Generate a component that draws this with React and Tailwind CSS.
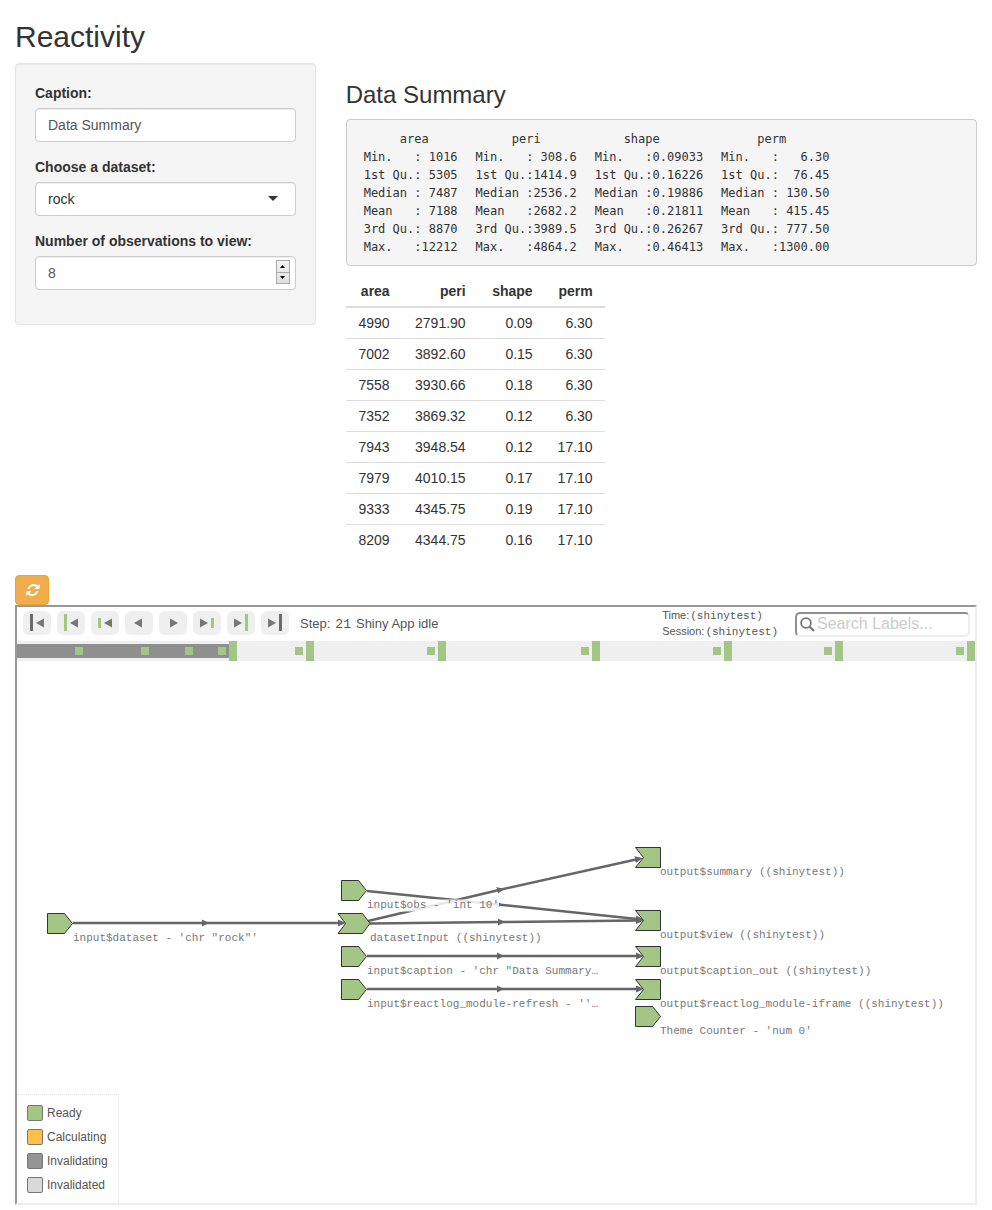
import { useState } from "react";

const summary = [
  ["     area    ", "Min.   : 1016", "1st Qu.: 5305", "Median : 7487", "Mean   : 7188", "3rd Qu.: 8870", "Max.   :12212"],
  ["     peri     ", "Min.   : 308.6", "1st Qu.:1414.9", "Median :2536.2", "Mean   :2682.2", "3rd Qu.:3989.5", "Max.   :4864.2"],
  ["    shape      ", "Min.   :0.09033", "1st Qu.:0.16226", "Median :0.19886", "Mean   :0.21811", "3rd Qu.:0.26267", "Max.   :0.46413"],
  ["     perm      ", "Min.   :   6.30", "1st Qu.:  76.45", "Median : 130.50", "Mean   : 415.45", "3rd Qu.: 777.50", "Max.   :1300.00"],
];

const rows = [
  ["4990", "2791.90", "0.09", "6.30"],
  ["7002", "3892.60", "0.15", "6.30"],
  ["7558", "3930.66", "0.18", "6.30"],
  ["7352", "3869.32", "0.12", "6.30"],
  ["7943", "3948.54", "0.12", "17.10"],
  ["7979", "4010.15", "0.17", "17.10"],
  ["9333", "4345.75", "0.19", "17.10"],
  ["8209", "4344.75", "0.16", "17.10"],
];

const field =
  "block h-[34px] w-full rounded border border-[#ccc] bg-white px-3 text-sm shadow-[inset_0_1px_1px_rgba(0,0,0,0.075)] outline-none";

function Sidebar() {
  const [obs, setObs] = useState(8);
  return (
    <form className="rounded border border-[#e3e3e3] bg-[#f5f5f5] p-[19px] shadow-[inset_0_1px_1px_rgba(0,0,0,0.05)]">
      <div className="mb-[15px]">
        <label htmlFor="caption" className="mb-[5px] block text-sm font-bold">Caption:</label>
        <input id="caption" type="text" defaultValue="Data Summary" className={field + " text-[#555]"} />
      </div>
      <div className="mb-[15px]">
        <label htmlFor="dataset" className="mb-[5px] block text-sm font-bold">Choose a dataset:</label>
        <div className="relative">
          <select id="dataset" defaultValue="rock" className={field + " appearance-none text-[#333]"}>
            <option>rock</option>
            <option>pressure</option>
            <option>cars</option>
          </select>
          <svg className="pointer-events-none absolute top-[14px] right-[18px]" width="10" height="5" viewBox="0 0 10 5">
            <path d="M0 0H10L5 5Z" fill="#333" />
          </svg>
        </div>
      </div>
      <div className="mb-[15px]">
        <label htmlFor="obs" className="mb-[5px] block text-sm font-bold">Number of observations to view:</label>
        <div className="relative">
          <input
            id="obs"
            type="number"
            value={obs}
            onChange={(e) => setObs(Number(e.target.value))}
            className={field + " text-[#555] [appearance:textfield] [&::-webkit-inner-spin-button]:appearance-none"}
          />
          <div className="absolute top-1 right-[6px] flex h-6 w-[14px] flex-col border border-[#aaa] bg-linear-to-b from-[#f3f3f3] to-[#e0e0e0]">
            <button type="button" aria-label="Increase" onClick={() => setObs(obs + 1)} className="flex flex-1 items-center justify-center border-b border-[#aaa]">
              <svg width="5" height="3" viewBox="0 0 5 3"><path d="M0 3H5L2.5 0Z" fill="#000" /></svg>
            </button>
            <button type="button" aria-label="Decrease" onClick={() => setObs(obs - 1)} className="flex flex-1 items-center justify-center">
              <svg width="5" height="3" viewBox="0 0 5 3"><path d="M0 0H5L2.5 3Z" fill="#000" /></svg>
            </button>
          </div>
        </div>
      </div>
    </form>
  );
}

function Results() {
  return (
    <div className="min-w-0 pt-5">
      <h3 className="mb-3 text-2xl leading-6">Data Summary</h3>
      <pre className="mb-[10px] flex gap-[18px] overflow-hidden rounded border border-[#ccc] bg-[#f5f5f5] pt-[10px] pr-[10px] pb-[9px] pl-[17px] font-['DejaVu_Sans_Mono','Liberation_Mono',monospace] text-xs leading-[18px]">
        {summary.map((col, i) => (
          <span key={i}>{col.join("\n")}</span>
        ))}
      </pre>
      <table className="text-right text-sm">
        <thead>
          <tr className="border-b-2 border-[#ddd]">
            <th className="w-[56px] px-3 py-[5px] font-bold">area</th>
            <th className="w-[76px] px-3 py-[5px] font-bold">peri</th>
            <th className="w-[67px] px-3 py-[5px] font-bold">shape</th>
            <th className="w-[60px] px-3 py-[5px] font-bold">perm</th>
          </tr>
        </thead>
        <tbody>
          {rows.map((r) => (
            <tr key={r[0]} className="border-b border-[#ddd] last:border-b-0">
              {r.map((v, i) => (
                <td key={i} className="px-3 py-[5px]">{v}</td>
              ))}
            </tr>
          ))}
        </tbody>
      </table>
    </div>
  );
}

const DARK = "#6b6b6b";
const GREEN = "#a3c586";

const steps = [
  { label: "First step", arrow: "M21 7.5V16.5L13 12Z", bar: [7, 3, 17, DARK] },
  { label: "Previous idle", arrow: "M21 7.5V16.5L13 12Z", bar: [7, 3, 17, GREEN] },
  { label: "Previous flush", arrow: "M21 7.5V16.5L13 12Z", bar: [7, 7, 10, GREEN] },
  { label: "Previous step", arrow: "M17 7.5V16.5L9 12Z" },
  { label: "Next step", arrow: "M11 7.5V16.5L19 12Z" },
  { label: "Next flush", arrow: "M7 7.5V16.5L15 12Z", bar: [18, 7, 10, GREEN] },
  { label: "Next idle", arrow: "M7 7.5V16.5L15 12Z", bar: [18, 3, 17, GREEN] },
  { label: "Last step", arrow: "M7 7.5V16.5L15 12Z", bar: [18, 3, 17, DARK] },
];

function Toolbar() {
  return (
    <div className="flex h-[34px] items-center pr-[5px] pl-[6px] text-[#555]">
      <div className="flex gap-[6px] pb-[2px]">
        {steps.map((s) => (
          <button key={s.label} type="button" aria-label={s.label} className="h-6 w-7 rounded-md bg-[#efefef]">
            <svg width="28" height="24" viewBox="0 0 28 24">
              {s.bar && <rect x={s.bar[0]} y={s.bar[1]} width="3" height={s.bar[2]} fill={s.bar[3]} />}
              <path d={s.arrow} fill="#777" />
            </svg>
          </button>
        ))}
      </div>
      <p className="ml-[11px] flex items-baseline gap-[5px] pt-[2px] text-[13px]">
        <span>Step:</span>
        <span className="font-['Liberation_Mono',monospace]">21</span>
        <span>Shiny App idle</span>
      </p>
      <div className="mr-[17px] ml-auto text-[11px] leading-[15px]">
        <p>Time:<span className="ml-[1px] font-['Liberation_Mono',monospace]">(shinytest)</span></p>
        <p>Session:<span className="ml-[1px] font-['Liberation_Mono',monospace]">(shinytest)</span></p>
      </div>
      <label className="flex h-[25px] w-[175px] items-center rounded-[5px] border-2 border-t-[#8f8f8f] border-r-[#eee] border-b-[#eee] border-l-[#8f8f8f] pl-[3px]">
        <svg className="shrink-0" width="15" height="15" viewBox="0 0 15 15" fill="none" stroke="#777" strokeWidth="1.8">
          <circle cx="6" cy="6" r="4.9" />
          <path d="M9.5 9.5L14 14" strokeWidth="2.2" />
        </svg>
        <input
          type="search"
          aria-label="Search Labels"
          placeholder="Search Labels..."
          className="ml-[2px] w-full min-w-0 text-base leading-5 outline-none placeholder:text-[#ccc]"
        />
      </label>
    </div>
  );
}

const flushes = [58, 124, 168, 201, 278, 410, 564, 696, 807, 939];
const idles = [212, 289, 421, 575, 707, 818, 950];

function Timeline() {
  return (
    <svg className="block h-5 w-full" viewBox="0 0 958 20" preserveAspectRatio="none" role="img" aria-label="Timeline">
      <rect width="958" height="20" fill="#efefef" />
      <rect y="3" width="214" height="14" fill="#8f8f8f" />
      {flushes.map((x) => <rect key={x} x={x} y="6" width="8" height="8" fill={GREEN} />)}
      {idles.map((x) => <rect key={x} x={x} width="8" height="20" fill={GREEN} />)}
    </svg>
  );
}

const shapes = {
  source: "0,-10 17,-10 25,0 17,10 0,10",
  middle: "-3.5,-10 21,-10 28.5,0 21,10 -3.5,10 4,0",
  sink: "0,-10 25,-10 25,10 0,10 8,0",
};

const nodes = [
  { x: 30.5, y: 262.5, shape: "source", label: "input$dataset - 'chr \"rock\"'", dx: 25.5 },
  { x: 324.5, y: 229.5, shape: "source", label: "input$obs - 'int 10'", dx: 25.5 },
  { x: 324.5, y: 262.5, shape: "middle", label: "datasetInput ((shinytest))", dx: 28.5 },
  { x: 324.5, y: 295.5, shape: "source", label: "input$caption - 'chr \"Data Summary…", dx: 25.5 },
  { x: 324.5, y: 328.5, shape: "source", label: "input$reactlog_module-refresh - ''…", dx: 25.5 },
  { x: 618.5, y: 196.5, shape: "sink", label: "output$summary ((shinytest))", dx: 24.5 },
  { x: 618.5, y: 259.5, shape: "sink", label: "output$view ((shinytest))", dx: 24.5 },
  { x: 618.5, y: 295.5, shape: "sink", label: "output$caption_out ((shinytest))", dx: 24.5 },
  { x: 618.5, y: 328.5, shape: "sink", label: "output$reactlog_module-iframe ((shinytest))", dx: 24.5 },
  { x: 618.5, y: 355.5, shape: "source", label: "Theme Counter - 'num 0'", dx: 24.5 },
];

const edges = [
  "M56 262L187 262L322 262",
  "M350 230L481 243.5L620 258",
  "M351 260L482 229L619 198.5",
  "M353 262.5L483 261L620 259.5",
  "M350 295L482 295L620 295",
  "M350 328L482 328L620 328",
];

function Graph() {
  return (
    <svg className="block h-auto w-full" viewBox="0 0 958 542" role="img" aria-label="Reactive graph">
      <defs>
        <marker id="mid" markerUnits="userSpaceOnUse" markerWidth="8" markerHeight="8" refX="2" refY="4" orient="auto">
          <path d="M0 0.5L7 4L0 7.5Z" fill="#666" />
        </marker>
        <marker id="end" markerUnits="userSpaceOnUse" markerWidth="9" markerHeight="8" refX="1" refY="4" orient="auto">
          <path d="M0 0.5L8 4L0 7.5Z" fill="#666" />
        </marker>
      </defs>
      {edges.map((d) => (
        <path key={d} d={d} fill="none" stroke="#666" strokeWidth="2.5" markerMid="url(#mid)" markerEnd="url(#end)" />
      ))}
      {nodes.map((n) => (
        <g key={n.label} transform={`translate(${n.x} ${n.y})`}>
          <rect x={n.dx} y="9" width={n.label.length * 6.6} height="12" fill="#fff" fillOpacity="0.85" />
          <polygon points={shapes[n.shape]} fill={GREEN} stroke="#333" strokeWidth="1" />
          <text x={n.dx} y="17" fontSize="11" fill="#777" className="font-['Liberation_Mono',monospace]">{n.label}</text>
        </g>
      ))}
    </svg>
  );
}

function Legend() {
  return (
    <ul className="absolute bottom-0 left-0 flex flex-col gap-2 border-t border-r border-dotted border-[#ddd] bg-white p-[10px] text-xs leading-4 text-[#555]">
      <li className="flex items-center gap-1"><span className="size-4 rounded-xs border border-[#777] bg-[#a3c586]" />Ready</li>
      <li className="flex items-center gap-1"><span className="size-4 rounded-xs border border-[#777] bg-[#ffbf4a]" />Calculating</li>
      <li className="flex items-center gap-1"><span className="size-4 rounded-xs border border-[#777] bg-[#949494]" />Invalidating</li>
      <li className="flex items-center gap-1"><span className="size-4 rounded-xs border border-[#777] bg-[#d9d9d9]" />Invalidated</li>
    </ul>
  );
}

function RefreshIcon() {
  return (
    <svg className="size-3 -skew-x-12 overflow-visible" viewBox="0 0 1536 1536" fill="currentColor" aria-hidden="true">
      <path d="M1511 928q0 5-1 7-64 268-268 434.5t-478 166.5q-146 0-282.5-55t-243.5-157l-129 129q-19 19-45 19t-45-19-19-45v-448q0-26 19-45t45-19h448q26 0 45 19t19 45-19 45l-137 137q71 66 161 102t187 36q134 0 250-65t186-179q11-17 53-117 8-23 30-23h192q13 0 22.5 9.5t9.5 22.5zm25-800v448q0 26-19 45t-45 19h-448q-26 0-45-19t-19-45 19-45l138-138q-148-137-349-137-134 0-250 65t-186 179q-11 17-53 117-8 23-30 23h-199q-13 0-22.5-9.5t-9.5-22.5v-7q65-268 270-434.5t480-166.5q146 0 284 55.5t245 156.5l130-129q19-19 45-19t45 19 19 45z" />
    </svg>
  );
}

export default function App() {
  return (
    <main className="bg-white px-[15px] pt-5 pb-[5px] font-['Liberation_Sans',Arial,sans-serif] text-sm text-[#333]">
      <h2 className="mb-[10px] text-3xl leading-[33px]">Reactivity</h2>
      <div className="grid grid-cols-3 items-start gap-[30px]">
        <Sidebar />
        <div className="col-span-2 min-w-0">
          <Results />
        </div>
      </div>
      <button
        type="button"
        aria-label="Refresh"
        className="mt-5 flex h-[30px] w-[34px] items-center justify-center rounded border border-[#eea236] bg-[#f0ad4e] pl-[2px] text-white"
      >
        <RefreshIcon />
      </button>
      <section className="border-2 border-t-[#999] border-r-[#eee] border-b-[#eee] border-l-[#999]">
        <Toolbar />
        <Timeline />
        <div className="relative">
          <Graph />
          <Legend />
        </div>
      </section>
    </main>
  );
}
